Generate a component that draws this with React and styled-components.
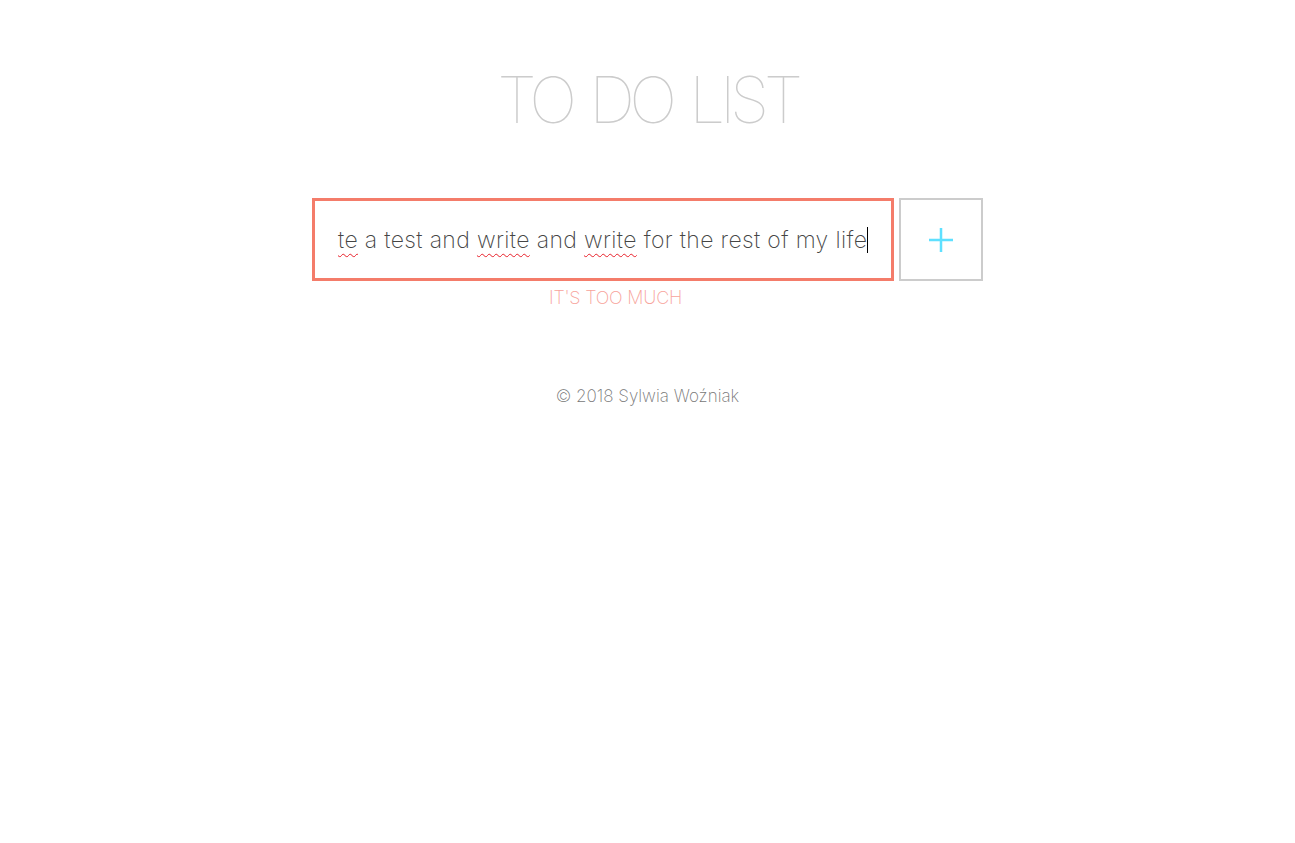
import React from "react";
import styled, { createGlobalStyle } from "styled-components";

const Global = createGlobalStyle`
  html, body { margin: 0; padding: 0; background: #fff; }
  body { font-family: "Inter", "Lato", sans-serif; }
`;

const Page = styled.div`
  display: flex;
  flex-direction: column;
  align-items: center;
  padding-top: 62px;
`;

const Title = styled.h1`
  margin: 0;
  font-family: "Inter", sans-serif;
  font-weight: 100;
  font-size: 64px;
  line-height: 76px;
  color: #cccccc;
  letter-spacing: -5.5px;
  word-spacing: 5px;
`;

const Form = styled.div`
  display: flex;
  gap: 5px;
  margin-top: 60px;
`;

const Field = styled.div`
  box-sizing: border-box;
  width: 582px;
  height: 83px;
  border: 3px solid #f47c6a;
  padding: 0 23px;
  display: flex;
  align-items: center;
  font-family: "Inter", sans-serif;
  font-weight: 200;
  font-size: 23px;
  letter-spacing: 0.35px;
  color: #454545;
  white-space: nowrap;
  overflow: hidden;
`;

const Misspelled = styled.span`
  text-decoration: underline wavy #e8202a;
  text-decoration-thickness: 1px;
  text-underline-offset: 5px;
`;

const Caret = styled.span`
  display: inline-block;
  width: 1px;
  height: 26px;
  background: #000;
  vertical-align: middle;
`;

const AddButton = styled.button`
  box-sizing: border-box;
  width: 84px;
  height: 83px;
  border: 2px solid #cccccc;
  background: #fff;
  display: flex;
  align-items: center;
  justify-content: center;
  padding: 0;
  cursor: pointer;
`;

const Warning = styled.div`
  align-self: flex-start;
  margin-left: 549px;
  margin-top: 6px;
  font-family: "Inter", sans-serif;
  font-weight: 200;
  font-size: 18px;
  line-height: 22px;
  letter-spacing: -0.2px;
  color: #f7a39b;
`;

const Footer = styled.footer`
  margin-top: 77px;
  font-family: "Inter", sans-serif;
  font-weight: 200;
  font-size: 17px;
  color: #777;
`;

export default function App() {
  return (
    <>
      <Global />
      <Page>
        <Title>TO DO LIST</Title>
        <Form>
          <Field>
            <Misspelled>te</Misspelled>&nbsp;a test and&nbsp;<Misspelled>write</Misspelled>&nbsp;and&nbsp;
            <Misspelled>write</Misspelled>&nbsp;for the rest of my life<Caret />
          </Field>
          <AddButton aria-label="add">
            <svg width="26" height="26" viewBox="0 0 26 26">
              <path d="M13 1v24M1 13h24" stroke="#5ee0ff" strokeWidth="2.5" fill="none" />
            </svg>
          </AddButton>
        </Form>
        <Warning>IT'S TOO MUCH</Warning>
        <Footer>© 2018 Sylwia Woźniak</Footer>
      </Page>
    </>
  );
}
